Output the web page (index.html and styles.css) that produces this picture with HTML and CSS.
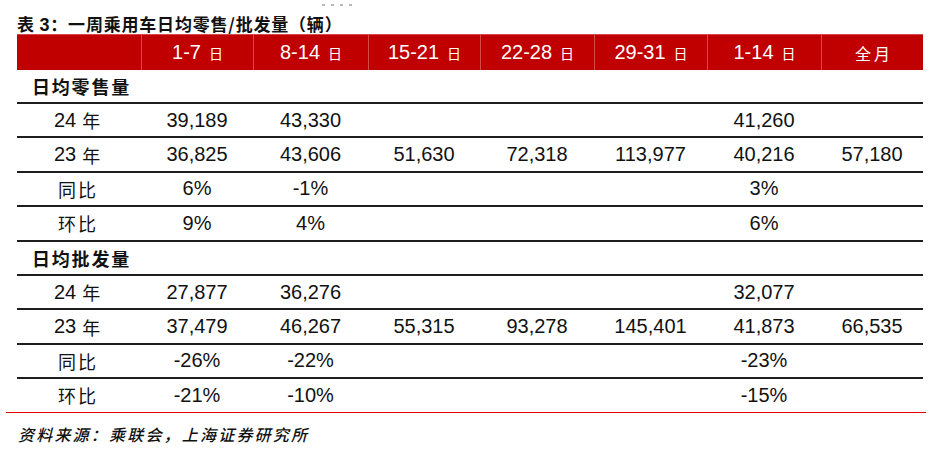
FILE: index.html
```html
<!DOCTYPE html>
<html lang="zh">
<head>
<meta charset="utf-8">
<title>表3</title>
<link rel="stylesheet" href="styles.css">
</head>
<body>
<div class="page">
  <div class="dots"><span></span><span></span><span></span><span></span></div>
  <div class="title">表 <b class="num">3</b>：一周乘用车日均零售/批发量（辆）</div>
  <div class="tbl">
    <div class="row head">
      <div class="c"></div>
      <div class="c"><span class="n">1-7</span><span class="d">日</span></div>
      <div class="c"><span class="n">8-14</span><span class="d">日</span></div>
      <div class="c"><span class="n">15-21</span><span class="d">日</span></div>
      <div class="c"><span class="n">22-28</span><span class="d">日</span></div>
      <div class="c"><span class="n">29-31</span><span class="d">日</span></div>
      <div class="c"><span class="n">1-14</span><span class="d">日</span></div>
      <div class="c"><span class="qy">全月</span></div>
    </div>
    <div class="row sec first"><div class="lbl">日均零售量</div></div>
    <div class="row">
      <div class="c k"><span class="n">24</span><span>年</span></div>
      <div class="c">39,189</div><div class="c">43,330</div><div class="c"></div><div class="c"></div><div class="c"></div><div class="c">41,260</div><div class="c"></div>
    </div>
    <div class="row">
      <div class="c k"><span class="n">23</span><span>年</span></div>
      <div class="c">36,825</div><div class="c">43,606</div><div class="c">51,630</div><div class="c">72,318</div><div class="c">113,977</div><div class="c">40,216</div><div class="c">57,180</div>
    </div>
    <div class="row">
      <div class="c k">同比</div>
      <div class="c">6%</div><div class="c">-1%</div><div class="c"></div><div class="c"></div><div class="c"></div><div class="c">3%</div><div class="c"></div>
    </div>
    <div class="row">
      <div class="c k">环比</div>
      <div class="c">9%</div><div class="c">4%</div><div class="c"></div><div class="c"></div><div class="c"></div><div class="c">6%</div><div class="c"></div>
    </div>
    <div class="row sec"><div class="lbl">日均批发量</div></div>
    <div class="row">
      <div class="c k"><span class="n">24</span><span>年</span></div>
      <div class="c">27,877</div><div class="c">36,276</div><div class="c"></div><div class="c"></div><div class="c"></div><div class="c">32,077</div><div class="c"></div>
    </div>
    <div class="row">
      <div class="c k"><span class="n">23</span><span>年</span></div>
      <div class="c">37,479</div><div class="c">46,267</div><div class="c">55,315</div><div class="c">93,278</div><div class="c">145,401</div><div class="c">41,873</div><div class="c">66,535</div>
    </div>
    <div class="row">
      <div class="c k">同比</div>
      <div class="c">-26%</div><div class="c">-22%</div><div class="c"></div><div class="c"></div><div class="c"></div><div class="c">-23%</div><div class="c"></div>
    </div>
    <div class="row">
      <div class="c k">环比</div>
      <div class="c">-21%</div><div class="c">-10%</div><div class="c"></div><div class="c"></div><div class="c"></div><div class="c">-15%</div><div class="c"></div>
    </div>
  </div>
  <div class="rule"></div>
  <div class="source">资料来源：乘联会，上海证券研究所</div>
</div>
</body>
</html>
```

FILE: styles.css
```css
html, body {
  margin: 0;
  padding: 0;
  background: #ffffff;
}
body {
  width: 932px;
  height: 457px;
  overflow: hidden;
  font-family: "Liberation Sans", "Noto Sans CJK SC", sans-serif;
  color: #111;
}
.page {
  padding-left: 6px;
}
.dots {
  height: 13px;
  display: flex;
  gap: 6px;
  padding-left: 316px;
  padding-top: 4px;
  box-sizing: border-box;
}
.dots span {
  width: 3px;
  height: 2px;
  background: #b8b8b8;
}
.title {
  margin-left: 11px;
  height: 21px;
  line-height: 21px;
  font-family: "Noto Sans CJK SC", sans-serif;
  font-weight: 700;
  font-size: 17px;
  letter-spacing: 0.8px;
  color: #111;
  white-space: nowrap;
}
.title .num {
  font-family: "Liberation Sans", sans-serif;
  font-size: 18px;
}
.tbl {
  margin-left: 11px;
  width: 906px;
}
.row {
  display: grid;
  grid-template-columns: 124px 112px 115px 112px 114px 113px 114px 102px;
  height: 34.4px;
  box-sizing: border-box;
  border-top: 2px solid #1e1e1e;
}
.row.head {
  height: 36px;
  border-top: 1px solid #d84848;
  background: #c00000;
  color: #fff;
}
.row.head .c + .c {
  border-left: 1px solid #d24a4a;
}
.row.sec {
  display: flex;
  align-items: center;
}
.row.sec.first {
  border-top: none;
  height: 32px;
}
.lbl {
  padding-left: 15px;
  font-family: "Noto Sans CJK SC", sans-serif;
  font-weight: 700;
  font-size: 18px;
  letter-spacing: 1.8px;
  color: #111;
}
.c {
  display: flex;
  align-items: center;
  justify-content: center;
  font-family: "Liberation Sans", sans-serif;
  font-size: 20px;
  white-space: nowrap;
}
.head .n {
  font-family: "Liberation Sans", sans-serif;
  font-size: 20px;
}
.head .d {
  font-family: "Noto Sans CJK SC", sans-serif;
  font-size: 14px;
  margin-left: 8px;
}
.head .qy {
  font-family: "Noto Sans CJK SC", sans-serif;
  font-size: 16px;
  letter-spacing: 3px;
  margin-left: 3px;
}
.k {
  font-family: "Noto Sans CJK SC", sans-serif;
  font-size: 18px;
  letter-spacing: 2px;
  padding-right: 2px;
}
.k .n {
  font-family: "Liberation Sans", sans-serif;
  font-size: 20px;
  letter-spacing: 0;
  margin-right: 6px;
}
.rule {
  width: 920px;
  height: 0;
  border-top: 1px solid #e00000;
}
.source {
  margin-left: 12px;
  padding-top: 11px;
  line-height: 20px;
  font-family: "Noto Sans CJK SC", sans-serif;
  font-style: italic;
  font-weight: 500;
  font-size: 16px;
  letter-spacing: 2.2px;
  color: #111;
}
```
